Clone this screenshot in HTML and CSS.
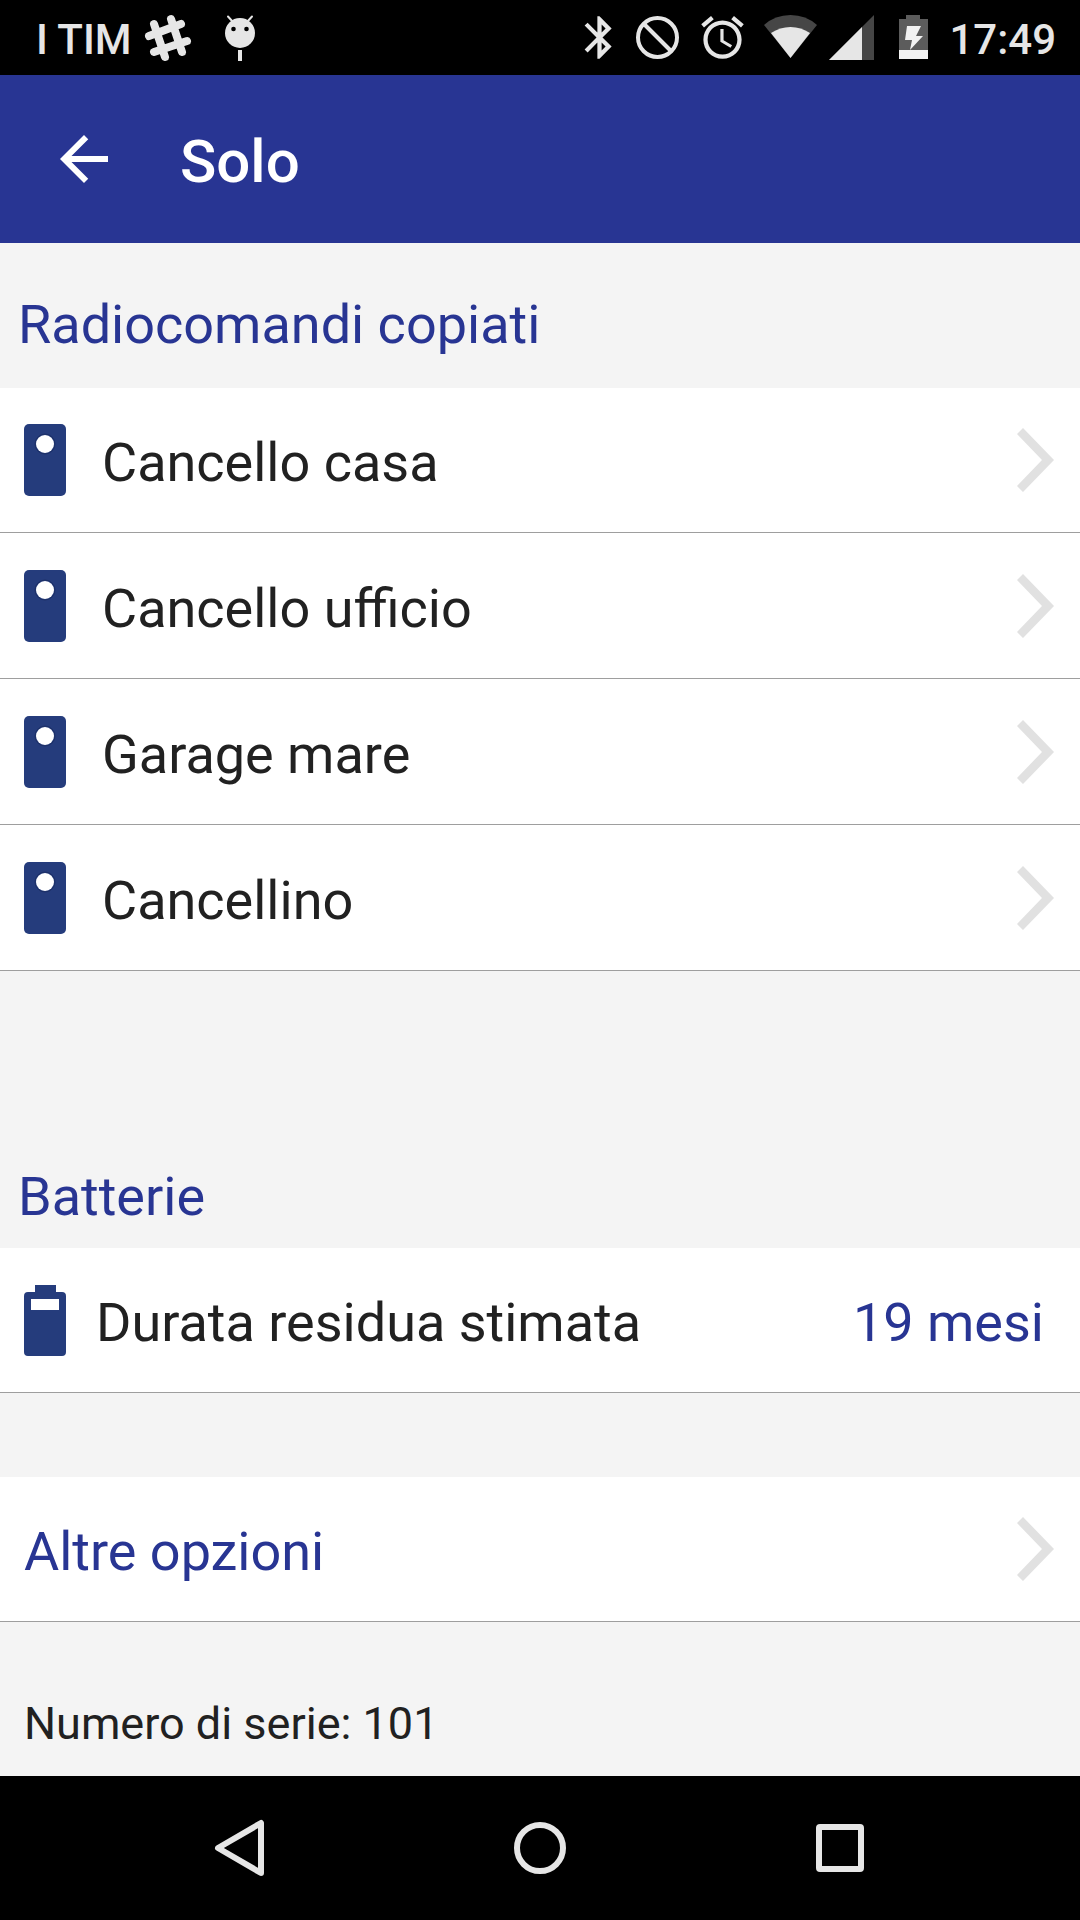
FILE: index.html
```html
<!DOCTYPE html>
<html lang="it">
<head>
    <meta charset="UTF-8">
    <meta name="viewport" content="width=device-width, initial-scale=1.0">
    <title>Solo</title>
    <link rel="stylesheet" href="styles.css">
</head>
<body>
    <!-- shared shapes -->
    <svg class="defs" aria-hidden="true">
        <symbol id="remote" viewBox="0 0 42 72">
            <rect width="42" height="72" rx="5" fill="#253c7c"/>
            <circle cx="21" cy="20" r="9" fill="#fff"/>
            <circle cx="21" cy="20" r="10" fill="none" stroke="#1c2f66" stroke-width="1"/>
        </symbol>
        <symbol id="chevron" viewBox="0 0 37 64">
            <path fill="#e1e1e1" d="M6 0L37 32L6 64L0 58L25 32L0 6Z"/>
        </symbol>
    </svg>

    <div class="status">
        <span class="carrier">I TIM</span>
        <svg class="slack" viewBox="0 0 48 48" width="48" height="48">
            <g stroke="#e6e6e6" stroke-width="8" stroke-linecap="round">
                <path d="M10 10L21 43M27 5L38 38M5 22L37 10M10 38L43 27"/>
            </g>
        </svg>
        <svg class="droid" viewBox="0 0 30 46" width="30" height="46">
            <path stroke="#e6e6e6" stroke-width="2" stroke-linecap="round" d="M3 1.500L8 7M27 1.500L22 7"/>
            <circle cx="15" cy="18" r="15" fill="#e6e6e6"/>
            <circle cx="8.500" cy="14" r="2.300"/>
            <circle cx="21.500" cy="14" r="2.300"/>
            <path fill="#e6e6e6" d="M13 35H17V46H13Z"/>
        </svg>

        <div class="status-right">
            <svg viewBox="0 0 52 75" width="52" height="75">
                <path fill="#e6e6e6" transform="translate(1 12) scale(2.125)" d="M17.710 7.710L12 2h-1v7.590L6.410 5 5 6.410 10.590 12 5 17.590 6.410 19 11 14.410V22h1l5.710-5.710-4.300-4.290 4.300-4.290zM13 5.830l1.880 1.880L13 9.590V5.830zm1.880 10.460L13 18.170v-3.760l1.880 1.880z"/>
            </svg>
            <svg viewBox="0 0 65 75" width="65" height="75">
                <g fill="none" stroke="#e6e6e6" stroke-width="4">
                    <circle cx="32.500" cy="37.500" r="19.500"/>
                    <path d="M19 24L46 51"/>
                </g>
            </svg>
            <svg viewBox="0 0 65 75" width="65" height="75">
                <path fill="#e6e6e6" transform="translate(7 12) scale(2.125)" d="M22 5.720l-4.600-3.860-1.290 1.530 4.600 3.860L22 5.720zM7.880 3.390L6.600 1.860 2 5.710l1.290 1.530 4.590-3.850zM12.500 8H11v6l4.750 2.850.750-1.230-4-2.370V8zM12 4c-4.970 0-9 4.030-9 9s4.020 9 9 9c4.970 0 9-4.030 9-9s-4.030-9-9-9zm0 16c-3.870 0-7-3.130-7-7s3.130-7 7-7 7 3.130 7 7-3.130 7-7 7z"/>
            </svg>
            <svg viewBox="0 0 66 75" width="66" height="75">
                <path fill="#464646" d="M35.500 58L9 25Q20 15 35.500 15T62 25Z"/>
                <path fill="#e6e6e6" d="M35.500 58L16 33Q25 27 35.500 27T55 33Z"/>
            </svg>
            <svg viewBox="0 0 62 75" width="62" height="75">
                <path fill="#464646" d="M8 60L53 15V60Z"/>
                <path fill="#e6e6e6" d="M8 60L41 27V60Z"/>
            </svg>
            <svg viewBox="0 0 60 75" width="60" height="75">
                <path fill="#5c5c5c" d="M23 15H37V19H45V50H16V19H23Z"/>
                <path fill="#f2f2f2" d="M16 50H45V59H16ZM24 26H38L33 36H40L27 50L29 40H22Z"/>
            </svg>
            <span class="clock">17:49</span>
        </div>
    </div>

    <header class="toolbar">
        <button type="button" class="back" aria-label="Indietro">
            <svg viewBox="0 0 24 24" width="72" height="72">
                <path fill="#fff" d="M20 11H7.830l5.590-5.590L12 4l-8 8 8 8 1.410-1.410L7.830 13H20v-2z"/>
            </svg>
        </button>
        <h1>Solo</h1>
    </header>

    <main>
        <h2 class="first">Radiocomandi copiati</h2>
        <ul class="list">
            <li><a href="#" class="row">
                <svg class="icon"><use href="#remote"/></svg>
                <span class="label">Cancello casa</span>
                <svg class="chevron"><use href="#chevron"/></svg>
            </a></li>
            <li><a href="#" class="row">
                <svg class="icon"><use href="#remote"/></svg>
                <span class="label">Cancello ufficio</span>
                <svg class="chevron"><use href="#chevron"/></svg>
            </a></li>
            <li><a href="#" class="row">
                <svg class="icon"><use href="#remote"/></svg>
                <span class="label">Garage mare</span>
                <svg class="chevron"><use href="#chevron"/></svg>
            </a></li>
            <li><a href="#" class="row">
                <svg class="icon"><use href="#remote"/></svg>
                <span class="label">Cancellino</span>
                <svg class="chevron"><use href="#chevron"/></svg>
            </a></li>
        </ul>

        <h2 class="second">Batterie</h2>
        <div class="row battery">
            <svg class="icon" viewBox="0 0 42 72">
                <path fill="#253c7c" fill-rule="evenodd" d="M11 1H32V8H38Q42 8 42 12V68Q42 72 38 72H4Q0 72 0 68V12Q0 8 4 8H11ZM7 15V26H35V15Z"/>
            </svg>
            <span class="label">Durata residua stimata</span>
            <span class="value">19 mesi</span>
        </div>

        <a href="#" class="row options">
            <span class="label">Altre opzioni</span>
            <svg class="chevron"><use href="#chevron"/></svg>
        </a>

        <p class="serial">Numero di serie: 101</p>
    </main>

    <nav class="navbar">
        <button type="button" aria-label="Indietro">
            <svg viewBox="0 0 60 60" width="60" height="60">
                <path fill="none" stroke="#e6e6e6" stroke-width="6" stroke-linejoin="round" d="M51 5V55L8 30Z"/>
            </svg>
        </button>
        <button type="button" aria-label="Home">
            <svg viewBox="0 0 60 60" width="60" height="60">
                <circle cx="30" cy="30" r="23" fill="none" stroke="#e6e6e6" stroke-width="6"/>
            </svg>
        </button>
        <button type="button" aria-label="Recenti">
            <svg viewBox="0 0 60 60" width="60" height="60">
                <rect x="9" y="9" width="42" height="42" rx="1" fill="none" stroke="#e6e6e6" stroke-width="6" stroke-linejoin="round"/>
            </svg>
        </button>
    </nav>
</body>
</html>
```
FILE: styles.css
```css
* {
    margin: 0;
    padding: 0;
    box-sizing: border-box;
}

body {
    display: flex;
    flex-direction: column;
    min-height: 100vh;
    background: #f4f4f4;
    color: #212121;
    font-family: Roboto, sans-serif;
    font-size: 54px;
    line-height: 64px;
}

svg {
    display: block;
    flex: none;
}

button {
    border: none;
    background: none;
    cursor: pointer;
}

a {
    color: inherit;
    text-decoration: none;
}

.defs {
    position: absolute;
    width: 0;
    height: 0;
}

/* status bar */
.status {
    display: flex;
    align-items: center;
    height: 75px;
    padding: 0 24px 0 36px;
    background: #000;
    color: #e6e6e6;
    font-size: 42px;
    font-weight: 500;
}

.carrier,
.clock {
    padding-top: 4px;
}

.toolbar h1,
.label,
.value {
    padding-top: 6px;
}

.slack {
    margin-left: 12px;
}

.droid {
    margin-left: 33px;
}

.status-right {
    display: flex;
    align-items: center;
    margin-left: auto;
}

.clock {
    margin-left: 6px;
}

/* toolbar */
.toolbar {
    display: flex;
    align-items: center;
    gap: 60px;
    height: 168px;
    padding: 0 48px;
    background: #283593;
    color: #fff;
}

.toolbar h1 {
    font-size: 60px;
    font-weight: 500;
}

/* content */
main {
    flex: 1;
}

h2 {
    padding-left: 18px;
    color: #283593;
    font-size: 54px;
    font-weight: 400;
}

.first {
    padding-top: 50px;
    padding-bottom: 31px;
}

.second {
    padding-top: 194px;
    padding-bottom: 19px;
}

.list {
    display: flex;
    flex-direction: column;
    gap: 1px;
    background: #fff;
    list-style: none;
}

.row {
    display: flex;
    align-items: center;
    height: 145px;
    padding: 0 26px 0 24px;
    border-bottom: 1px solid #9e9e9e;
    background: #fff;
}

.icon {
    width: 42px;
    height: 72px;
    margin-right: 36px;
}

.label {
    flex: 1;
}

.chevron {
    width: 37px;
    height: 64px;
}

.battery {
    padding-right: 36px;
}

.battery .icon {
    margin-right: 30px;
}

.value {
    color: #283593;
}

.options {
    margin-top: 84px;
    color: #283593;
}

.serial {
    padding: 70px 24px 20px;
    font-size: 45px;
}

/* bottom navigation */
.navbar {
    display: grid;
    grid-template-columns: repeat(3, 1fr);
    height: 144px;
    padding: 0 90px;
    background: #000;
}

.navbar button {
    display: flex;
    align-items: center;
    justify-content: center;
}
```
